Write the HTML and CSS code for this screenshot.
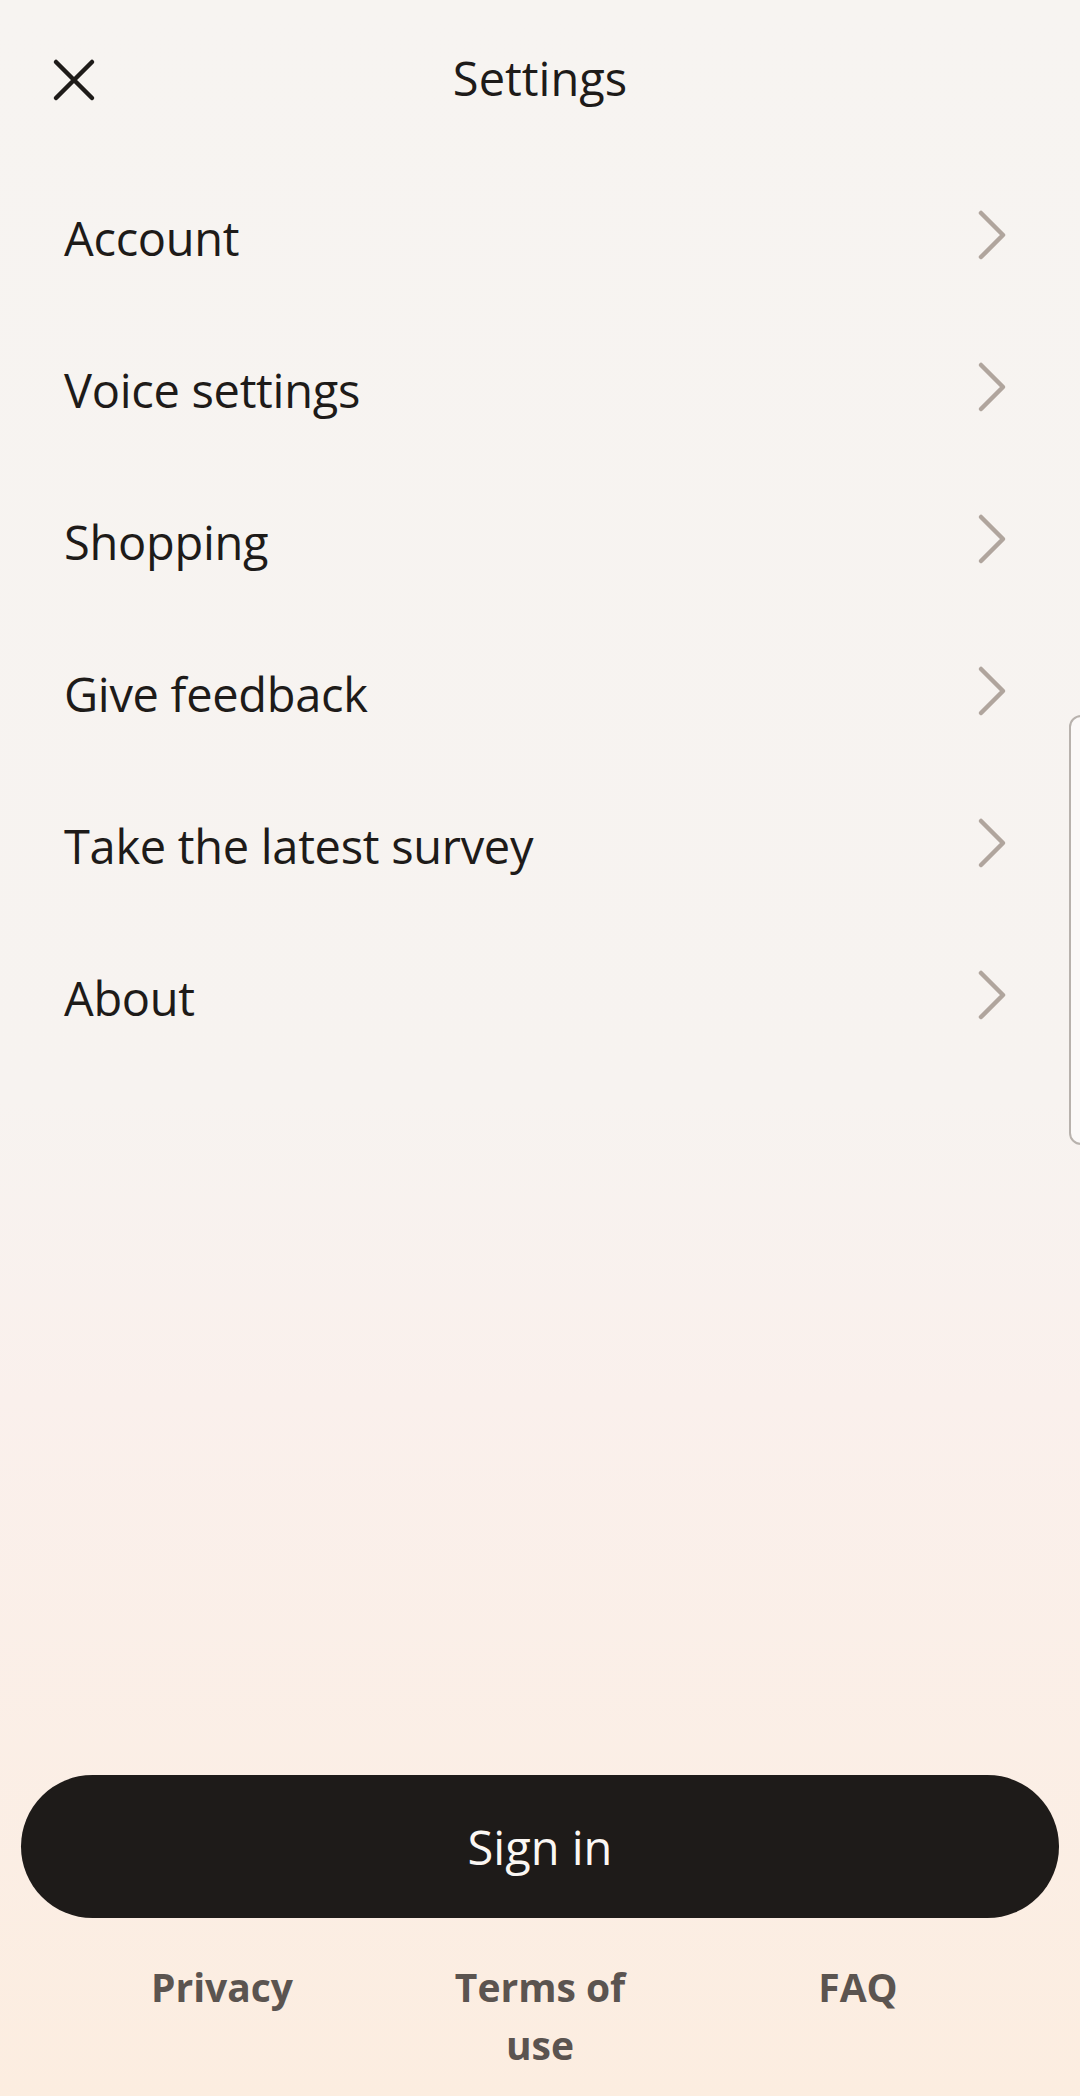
FILE: index.html
```html
<!DOCTYPE html>
<html lang="en">
<head>
    <meta charset="UTF-8">
    <meta name="viewport" content="width=device-width, initial-scale=1.0">
    <title>Settings</title>
    <link rel="stylesheet" href="styles.css">
</head>
<body>
    <div class="page">
        <div class="header">
            <button class="close" aria-label="Close">
                <svg width="44" height="44" viewBox="0 0 44 44">
                    <path d="M4 4 L40 40 M40 4 L4 40" stroke="#1e1b19" stroke-width="4.5" stroke-linecap="round" fill="none"/>
                </svg>
            </button>
            <div class="title">Settings</div>
        </div>
        <ul class="menu">
            <li class="row"><span>Account</span><svg class="chev" width="30" height="52" viewBox="0 0 30 52"><path d="M4 4 L26 26 L4 48" /></svg></li>
            <li class="row"><span>Voice settings</span><svg class="chev" width="30" height="52" viewBox="0 0 30 52"><path d="M4 4 L26 26 L4 48" /></svg></li>
            <li class="row"><span>Shopping</span><svg class="chev" width="30" height="52" viewBox="0 0 30 52"><path d="M4 4 L26 26 L4 48" /></svg></li>
            <li class="row"><span>Give feedback</span><svg class="chev" width="30" height="52" viewBox="0 0 30 52"><path d="M4 4 L26 26 L4 48" /></svg></li>
            <li class="row"><span>Take the latest survey</span><svg class="chev" width="30" height="52" viewBox="0 0 30 52"><path d="M4 4 L26 26 L4 48" /></svg></li>
            <li class="row"><span>About</span><svg class="chev" width="30" height="52" viewBox="0 0 30 52"><path d="M4 4 L26 26 L4 48" /></svg></li>
        </ul>
        <div class="spacer"></div>
        <button class="signin">Sign in</button>
        <div class="links">
            <a class="link">Privacy</a>
            <a class="link">Terms of use</a>
            <a class="link">FAQ</a>
        </div>
    </div>
    <div class="edge-panel"></div>
</body>
</html>
```

FILE: styles.css
```css
body {
    margin: 0;
    font-family: "Open Sans", "Noto Sans", sans-serif;
    color: #1e1b19;
    background: linear-gradient(to bottom, #f7f4f1 0px, #f7f3f0 1100px, #faf0ec 1400px, #fcede0 2096px);
}
.page {
    height: 2096px;
    display: flex;
    flex-direction: column;
}
.header {
    position: relative;
    height: 164px;
    display: flex;
    justify-content: center;
}
.close {
    position: absolute;
    left: 52px;
    top: 58px;
    padding: 0;
    border: none;
    background: none;
    width: 44px;
    height: 44px;
}
.title {
    font-size: 47px;
    line-height: 64px;
    margin-top: 46px;
}
.menu {
    list-style: none;
    margin: 0;
    padding: 0;
}
.row {
    height: 152px;
    display: flex;
    align-items: center;
    justify-content: space-between;
    padding: 0 73px 0 64px;
    font-size: 47px;
}
.row span {
    margin-top: -4px;
    letter-spacing: -0.3px;
}
.chev path {
    fill: none;
    stroke: #b0a59d;
    stroke-width: 4.5;
    stroke-linecap: round;
    stroke-linejoin: round;
}
.chev {
    margin-top: -10px;
}
.spacer {
    flex: 1;
}
.signin {
    margin: 0 21px;
    height: 143px;
    border: none;
    border-radius: 72px;
    background: #1e1b19;
    color: #fbf7f3;
    font-family: "Open Sans", "Noto Sans", sans-serif;
    font-size: 47px;
}
.links {
    display: grid;
    grid-template-columns: 1fr 1fr 1fr;
    margin: 40px 63px 22px;
}
.link {
    justify-self: center;
    max-width: 200px;
    text-align: center;
    font-weight: bold;
    font-size: 39px;
    line-height: 58px;
    color: #5b5450;
}
.edge-panel {
    position: absolute;
    top: 715px;
    left: 1069px;
    width: 30px;
    height: 426px;
    border: 2px solid #b8b2ad;
    border-radius: 12px;
    background: #fbf9f8;
}
html {
    overflow: hidden;
}
```
